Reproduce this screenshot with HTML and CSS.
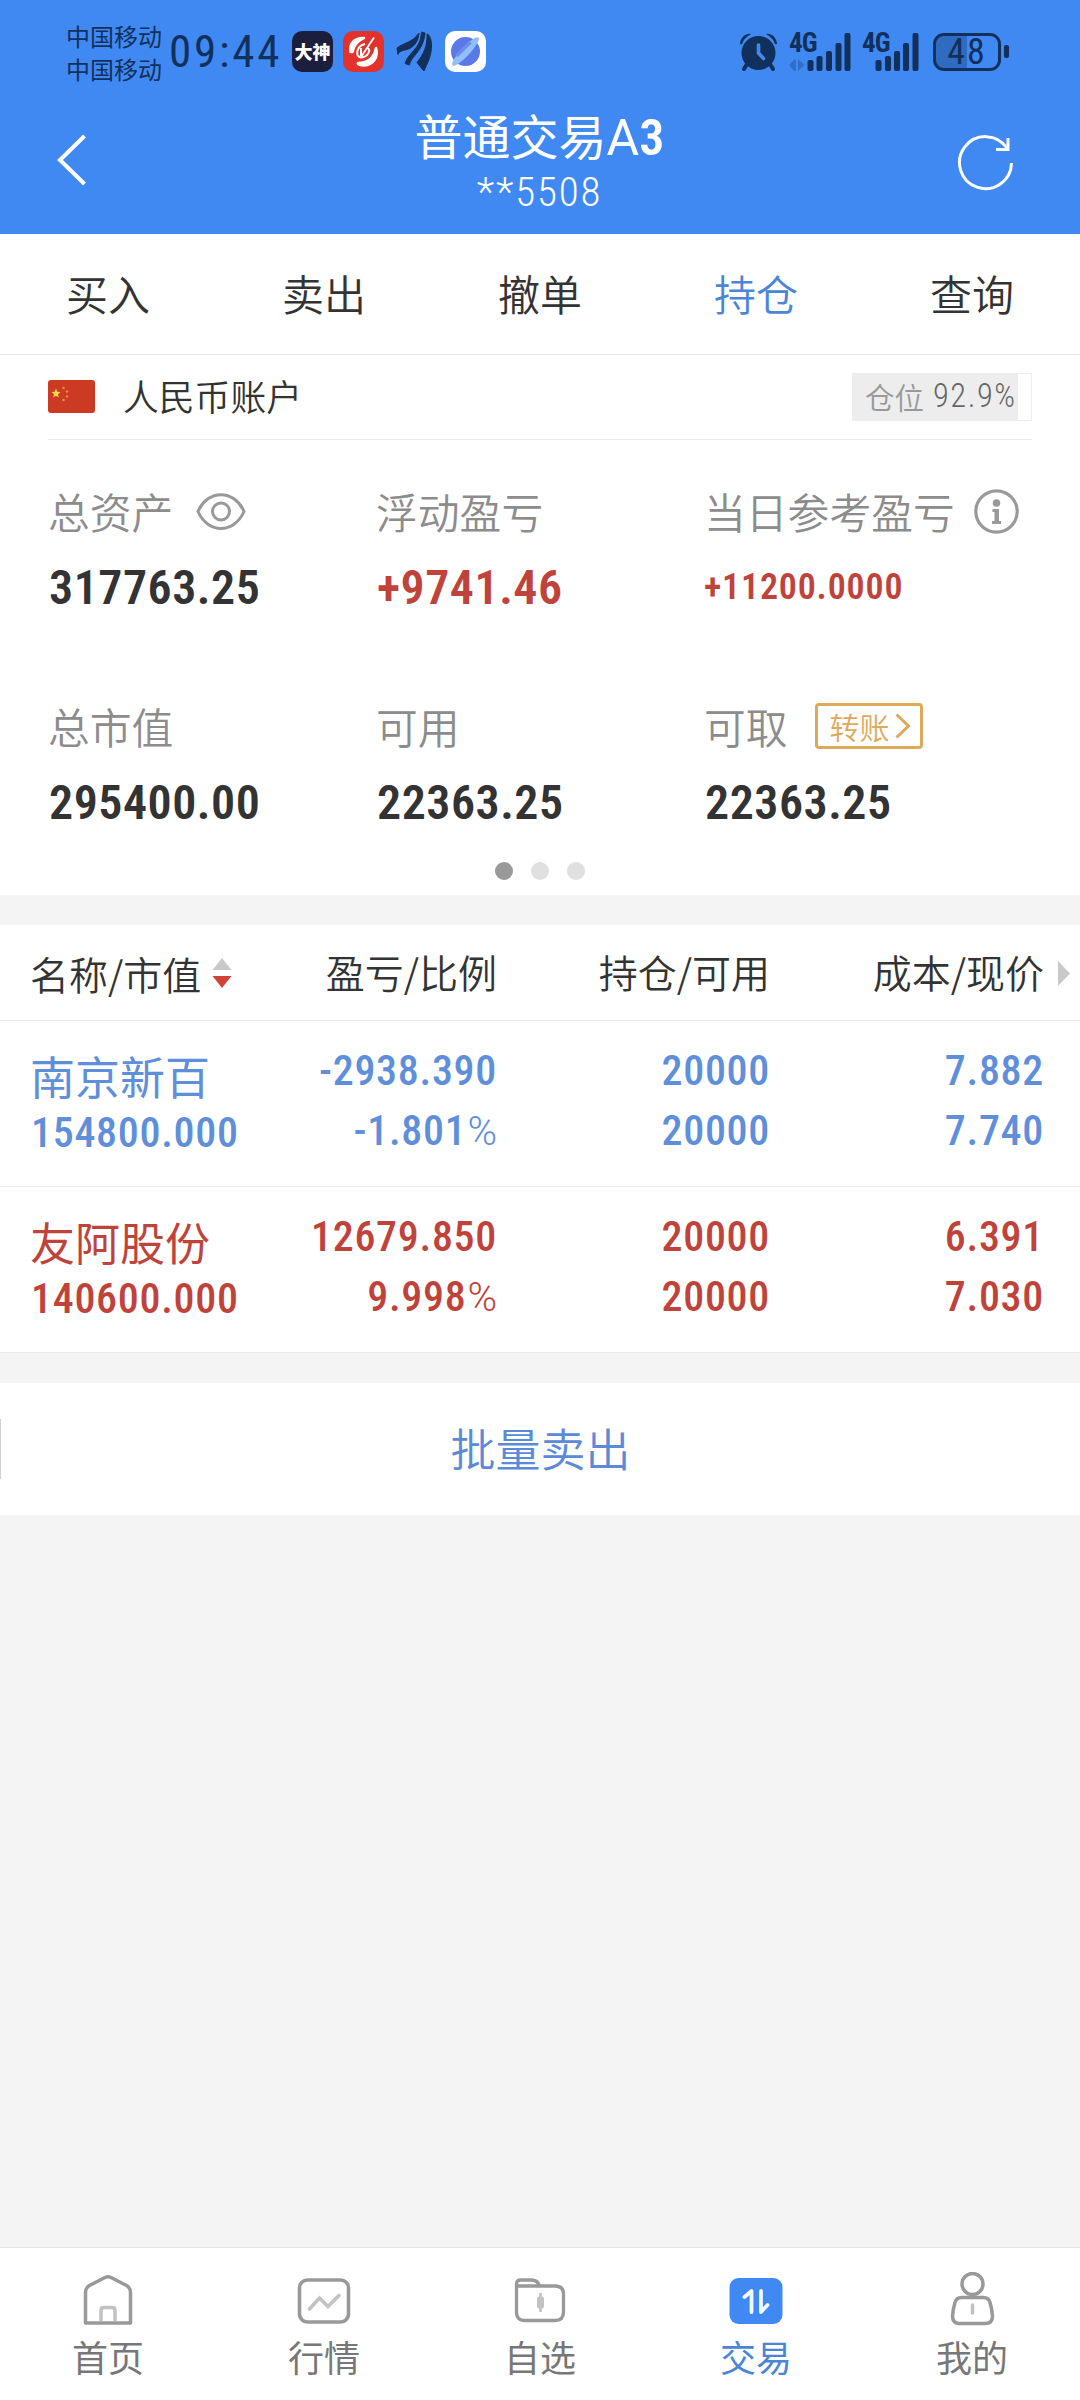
FILE: index.html
```html
<!DOCTYPE html>
<html lang="zh-CN">
<head>
    <meta charset="UTF-8">
    <meta name="viewport" content="width=device-width, initial-scale=1.0">
    <title>普通交易</title>
    <link rel="stylesheet" href="styles.css">
</head>
<body>
    <header class="topo">
        <div class="status">
            <div class="carrier">
                <span>中国移动</span>
                <span>中国移动</span>
            </div>
            <span class="clock">09:44</span>
            <div class="apps">
                <span class="app-dashen">大神</span>
                <svg width="41" height="41" viewBox="0 0 41 41">
                    <rect width="41" height="41" rx="10" fill="#e2322b"/>
                    <path d="M7.500 21C6 12 12 6.500 21 7C17 9 11 13 9.500 21Z" fill="#fff" stroke="#fff" stroke-width="2.500" stroke-linejoin="round"/>
                    <path d="M33 17C36 26 30 34 21 34.500C17 34.500 14 33 15 32C24 32 31 27 33 17Z" fill="#fff" stroke="#fff" stroke-width="2.500" stroke-linejoin="round"/>
                    <path d="M31 6.500L18 26" stroke="#fff" stroke-width="1.800"/>
                    <path d="M22 13C13 15 12 26 18 26.500C25 26 29 18 24 17M18 17L18 25" fill="none" stroke="#fff" stroke-width="2"/>
                </svg>
                <svg width="41" height="41" viewBox="0 0 41 41" fill="#12305c" stroke="#12305c" stroke-width="1">
                    <path d="M3 17C11 11 18 12 25 2C24.500 11 19 17 13 18.500C8 19.500 5 20.500 4 23.500Z"/>
                    <path d="M11 32.500C13 26 17 23 21 18C26 12 27 7 27.500 1L31 2C30 11 27 17 22 23C18 28 16 30 15.500 34Z"/>
                    <path d="M33 3C36 4 37.500 9 37.500 15C37.500 25 33 33 30 40C27 37 26 35 23 31.500C30 23 33.500 14 33 3Z"/>
                </svg>
                <svg width="41" height="41" viewBox="0 0 41 41">
                    <rect width="41" height="41" rx="10" fill="#fff"/>
                    <circle cx="20.500" cy="20.500" r="14.500" fill="#5b78e8"/>
                    <ellipse cx="20.500" cy="20.500" rx="19" ry="4.500" fill="#8fc0fb" transform="rotate(-47 20.500 20.500)"/>
                    <path d="M11.500 25L25.500 11" stroke="#6f8bee" stroke-width="3.500"/>
                </svg>
            </div>
            <div class="signals">
                <svg width="37" height="38" viewBox="0 0 37 38" fill="#12305c">
                    <circle cx="18.500" cy="20" r="17"/>
                    <path d="M0 10C1 4 6 0 11 1Q4 5 2 11Q0 12 0 10ZM37 10C36 4 31 0 26 1Q33 5 35 11Q37 12 37 10Z"/>
                    <path d="M7 31L4 36M30 31L33 36" stroke="#12305c" stroke-width="4" stroke-linecap="round"/>
                    <path d="M18.500 12V20L23.500 25.500" fill="none" stroke="#4089f2" stroke-width="3.600" stroke-linecap="round"/>
                </svg>
                <div class="signal">
                    <span>4G</span>
                    <svg width="62" height="39" viewBox="0 0 62 39" fill="#12305c">
                        <path d="M0 33L6 27V39H5ZM9 27L15.500 33L9 39ZM5 28H7V39H5Z" fill="#306fc8"/>
                        <rect x="18.500" y="28" width="6" height="11" rx="2"/>
                        <rect x="27.500" y="24" width="6" height="15" rx="2"/>
                        <rect x="37" y="19" width="6" height="20" rx="2"/>
                        <rect x="46.500" y="11" width="6" height="28" rx="2"/>
                        <rect x="55.500" y="1" width="6" height="38" rx="2"/>
                    </svg>
                </div>
                <div class="signal">
                    <span>4G</span>
                    <svg width="57" height="39" viewBox="0 0 57 39" fill="#12305c">
                        <rect x="13.500" y="28" width="6" height="11" rx="2"/>
                        <rect x="23" y="24" width="6" height="15" rx="2"/>
                        <rect x="32" y="19" width="6" height="20" rx="2"/>
                        <rect x="41" y="11" width="6" height="28" rx="2"/>
                        <rect x="50.500" y="1" width="6" height="38" rx="2"/>
                    </svg>
                </div>
                <div class="battery"><span>48</span></div>
                <i class="battery-tip"></i>
            </div>
        </div>
        <div class="titlebar">
            <svg width="32" height="52" viewBox="0 0 32 52"><path d="M28.500 2L4 26L28.500 50" fill="none" stroke="#fff" stroke-width="4"/></svg>
            <div class="title">
                <h1>普通交易<span>A</span><b>3</b></h1>
                <p>**5508</p>
            </div>
            <svg width="60" height="60" viewBox="0 0 60 60" fill="none" stroke="#fff" stroke-width="3">
                <path d="M56.500 31A26 26 0 1 1 52 16"/>
                <path d="M53 6V17.500H41"/>
            </svg>
        </div>
    </header>

    <nav class="tabs">
        <a>买入</a>
        <a>卖出</a>
        <a>撤单</a>
        <a class="on">持仓</a>
        <a>查询</a>
    </nav>

    <section class="assets">
        <div class="account">
            <svg width="47" height="33" viewBox="0 0 47 33">
                <rect width="47" height="33" rx="3" fill="#cc3a23"/>
                <path d="M8 8.500L9.300 11.700L12.500 12L10 14.200L10.800 17.500L8 15.700L5.200 17.500L6 14.200L3.500 12L6.700 11.700Z" fill="#fbd84a"/>
                <circle cx="15.500" cy="8" r="1.300" fill="#e88b33"/>
                <circle cx="19" cy="11.500" r="1.300" fill="#e88b33"/>
                <circle cx="19" cy="16.500" r="1.300" fill="#e88b33"/>
                <circle cx="15.500" cy="20" r="1.300" fill="#e88b33"/>
            </svg>
            <span class="account-name">人民币账户</span>
            <div class="position"><i style="width:92.9%"></i><span>仓位</span><em>92.9%</em></div>
        </div>
        <div class="metrics">
            <div class="metric">
                <div class="label">总资产
                    <svg class="eye" width="50" height="37" viewBox="0 0 50 37" fill="none" stroke="#999" stroke-width="3">
                        <path d="M2 18.500C12 -4 38 -4 48 18.500C38 41 12 41 2 18.500Z"/>
                        <circle cx="25" cy="18.500" r="8.500"/>
                    </svg>
                </div>
                <div class="value">317763.25</div>
            </div>
            <div class="metric">
                <div class="label">浮动盈亏</div>
                <div class="value red">+9741.46</div>
            </div>
            <div class="metric">
                <div class="label">当日参考盈亏
                    <svg class="info" width="45" height="45" viewBox="0 0 45 45" fill="#999">
                        <circle cx="22.500" cy="22.500" r="20.700" fill="none" stroke="#999" stroke-width="3.200"/>
                        <circle cx="22.500" cy="14" r="3.800"/>
                        <path d="M18.500 20H25V32H27V35H18V32H20.500V23H18.500Z"/>
                    </svg>
                </div>
                <div class="value red small">+11200.0000</div>
            </div>
            <div class="metric">
                <div class="label">总市值</div>
                <div class="value">295400.00</div>
            </div>
            <div class="metric">
                <div class="label">可用</div>
                <div class="value">22363.25</div>
            </div>
            <div class="metric">
                <div class="label">可取
                    <span class="transfer">转账<svg width="18" height="26" viewBox="0 0 18 26"><path d="M2.500 1.500L14.500 13L2.500 24.500" fill="none" stroke="#dfa95a" stroke-width="3"/></svg></span>
                </div>
                <div class="value">22363.25</div>
            </div>
        </div>
        <div class="dots"><i class="on"></i><i></i><i></i></div>
    </section>

    <section class="holdings">
        <div class="row head">
            <div class="name">名称/市值
                <svg width="20" height="30" viewBox="0 0 20 30"><path d="M10 0L19.500 12H0.500Z" fill="#c9c9c9"/><path d="M0.500 18H19.500L10 30Z" fill="#d0433a"/></svg>
            </div>
            <div>盈亏/比例</div>
            <div>持仓/可用</div>
            <div>成本/现价</div>
            <svg class="more" width="12" height="25" viewBox="0 0 12 25"><path d="M0 0L12 12.500L0 25Z" fill="#c9c9c9"/></svg>
        </div>
        <div class="row stock blue">
            <div class="name"><strong>南京新百</strong><span>154800.000</span></div>
            <div><span>-2938.390</span><span>-1.801<small>%</small></span></div>
            <div><span>20000</span><span>20000</span></div>
            <div><span>7.882</span><span>7.740</span></div>
        </div>
        <div class="row stock red">
            <div class="name"><strong>友阿股份</strong><span>140600.000</span></div>
            <div><span>12679.850</span><span>9.998<small>%</small></span></div>
            <div><span>20000</span><span>20000</span></div>
            <div><span>6.391</span><span>7.030</span></div>
        </div>
    </section>

    <div class="batch"><i></i><span>批量卖出</span></div>

    <footer class="bottom">
        <a>
            <svg width="54" height="56" viewBox="0 0 54 56" fill="none" stroke="#999" stroke-width="3.500">
                <path d="M4.500 51V20.500Q4.500 16 8.500 13.500L24 5.500Q27 4 30 5.500L45.500 13.500Q49.500 16 49.500 20.500V51Z" stroke-linejoin="round"/>
                <path d="M20 49V38Q20 35.500 22.500 35.500H31.500Q34 35.500 34 38V49" stroke="#c2c2c2"/>
            </svg>
            <span>首页</span>
        </a>
        <a>
            <svg width="54" height="56" viewBox="0 0 54 56" fill="none" stroke="#999" stroke-width="3.600">
                <rect x="2.500" y="8" width="49" height="42" rx="8"/>
                <path d="M12.500 37L22.500 26L31 34.500L42 23.500" stroke="#c2c2c2" stroke-linecap="round"/>
            </svg>
            <span>行情</span>
        </a>
        <a>
            <svg width="54" height="56" viewBox="0 0 54 56" fill="none" stroke="#999" stroke-width="3.300">
                <path d="M3.500 14V12Q3.500 8 7.500 8H18Q25 8 26.500 14M3.500 14H42Q50.500 14 50.500 22V40Q50.500 48.500 42 48.500H12Q3.500 48.500 3.500 40Z"/>
                <path d="M27.500 21V40" stroke="#c2c2c2" stroke-width="2.600"/>
                <rect x="24" y="24.500" width="7" height="12" rx="2" fill="#c2c2c2" stroke="none"/>
            </svg>
            <span>自选</span>
        </a>
        <a class="on">
            <svg width="54" height="56" viewBox="0 0 54 56" fill="none" stroke="#f2f8ff" stroke-width="3.800" stroke-linecap="round" stroke-linejoin="round">
                <rect x="0.500" y="6" width="53" height="46" rx="9" fill="#4089f2" stroke="none"/>
                <path d="M15.500 25L22.500 19V40M32 19V40L38.500 33"/>
            </svg>
            <span>交易</span>
        </a>
        <a>
            <svg width="54" height="56" viewBox="0 0 54 56" fill="none" stroke="#999" stroke-width="3.500">
                <circle cx="27.500" cy="12" r="10.500"/>
                <path d="M16.500 25.500H38.500Q43.500 25.500 45 30.500Q47 37 47.500 44Q47.500 51 41 51.500H14Q7.500 51 7.500 44Q8 37 10 30.500Q11.500 25.500 16.500 25.500Z"/>
                <path d="M27.500 33V41" stroke="#c2c2c2" stroke-linecap="round"/>
            </svg>
            <span>我的</span>
        </a>
    </footer>
</body>
</html>
```
FILE: styles.css
```css
* {
    box-sizing: border-box;
    margin: 0;
    padding: 0;
}

body {
    width: 1080px;
    height: 2400px;
    display: flex;
    flex-direction: column;
    background: #f4f4f4;
    color: #333;
    font-family: "Noto Sans CJK SC", sans-serif;
    font-weight: 350;
}

svg, i {
    display: block;
    flex-shrink: 0;
}

em, i {
    font-style: normal;
}

/* header */
.topo {
    height: 234px;
    background: #4089f2;
    color: #fff;
}

.status {
    display: flex;
    align-items: center;
    height: 103px;
    padding: 0 71px 0 66px;
    color: #12305c;
}

.carrier {
    display: flex;
    flex-direction: column;
    width: 103px;
    padding-top: 1px;
    font-size: 24px;
    line-height: 33px;
    font-weight: 400;
}

.clock {
    width: 123px;
    font-family: "Roboto Condensed", sans-serif;
    font-size: 45px;
    font-weight: 400;
    letter-spacing: 2.800px;
}

.apps {
    display: flex;
    gap: 10px;
}

.app-dashen {
    width: 41px;
    height: 41px;
    border-radius: 10px;
    background: #1b1f3d;
    color: #fff;
    font-size: 18px;
    font-weight: 900;
    line-height: 41px;
    text-align: center;
}

.signals {
    display: flex;
    align-items: center;
    margin-left: auto;
}

.signal {
    position: relative;
    margin-left: 12px;
}

.signal + .signal {
    margin-left: 11px;
}

/* network type sits over the low bars */
.signal span {
    position: absolute;
    left: 0;
    top: -5px;
    font-family: "Roboto Condensed", sans-serif;
    font-size: 27px;
    font-weight: 700;
    line-height: 32px;
    letter-spacing: -1px;
}

.battery {
    width: 68px;
    height: 38px;
    margin-left: 14px;
    border: 3px solid #12305c;
    border-radius: 11px;
    background: linear-gradient(90deg, #306bc2 31px, transparent 31px);
    font-family: "Roboto Condensed", sans-serif;
    font-size: 36px;
    font-weight: 400;
    letter-spacing: 2px;
    line-height: 32px;
    text-align: center;
}

.battery-tip {
    width: 5px;
    height: 13px;
    margin-left: 3px;
    border-radius: 2px;
    background: #12305c;
}

.titlebar {
    display: flex;
    justify-content: space-between;
    padding: 0 65px 0 56px;
    height: 131px;
}

.titlebar > svg:first-child {
    margin-top: 31px;
}

.titlebar > svg:last-child {
    margin-top: 29px;
}

.title {
    padding-left: 36px;
    text-align: center;
}

.title h1 {
    font-size: 48px;
    font-weight: 400;
    line-height: 62px;
}

.title h1 span {
    font-family: Roboto, sans-serif;
    font-size: 50px;
}

.title h1 b {
    font-family: "Roboto Condensed", sans-serif;
    font-size: 50px;
    font-weight: 600;
}

.title p {
    font-family: "Roboto Condensed", sans-serif;
    font-size: 41px;
    font-weight: 300;
    line-height: 47px;
    letter-spacing: 1.8px;
}

/* tabs */
.tabs {
    display: flex;
    height: 121px;
    background: #fff;
    border-bottom: 1px solid #e8e8e8;
}

.tabs a {
    flex: 1;
    font-size: 42px;
    line-height: 117px;
    text-align: center;
}

.tabs .on {
    color: #4b85d6;
}

/* account */
.assets {
    height: 540px;
    padding: 0 48px;
    background: #fff;
}

.account {
    display: flex;
    align-items: center;
    height: 85px;
    border-bottom: 1px solid #e8e8e8;
}

.account > svg {
    margin-bottom: 1px;
}

.account-name {
    margin-left: 28px;
    padding-bottom: 4px;
    font-size: 35.800px;
    line-height: 76px;
}

.position {
    position: relative;
    display: flex;
    align-items: center;
    width: 180px;
    height: 48px;
    margin-left: auto;
    padding-left: 12px;
    border: 1px solid #ededed;
    color: #999;
    font-size: 29.500px;
    line-height: 44px;
}

/* filled share of the position */
.position i {
    position: absolute;
    left: 0;
    top: 0;
    bottom: 0;
    background: #ededed;
}

.position span, .position em {
    position: relative;
    top: -1px;
}

.position em {
    margin-left: 9px;
    color: #666;
    font-family: "Roboto Condensed", sans-serif;
    font-size: 32.500px;
    font-weight: 350;
    letter-spacing: 1.5px;
}

.metrics {
    display: grid;
    grid-template-columns: 328px 328px 328px;
    grid-auto-rows: 215px;
    height: 408px;
    padding-top: 38px;
}

.label {
    display: flex;
    align-items: center;
    height: 66px;
    color: #8c8c8c;
    font-size: 41.800px;
    line-height: 60px;
    white-space: nowrap;
}

.value {
    padding: 14px 0 0 1px;
    font-family: "Roboto Condensed", sans-serif;
    font-size: 48px;
    font-weight: 600;
    line-height: 60px;
    letter-spacing: 0.500px;
}

.value.small {
    padding-left: 0;
    font-size: 36px;
    line-height: 58px;
    letter-spacing: 0.800px;
}

.red {
    color: #c0433b;
}

.eye {
    margin-left: 23px;
}

.info {
    margin-left: 19px;
}

.transfer {
    display: flex;
    align-items: center;
    width: 108px;
    height: 46px;
    margin-left: 27px;
    padding-left: 12px;
    border: 3px solid #dfa95a;
    border-radius: 4px;
    color: #dfa95a;
    font-size: 30px;
    line-height: 38px;
}

.transfer svg {
    margin-left: 4px;
}

.dots {
    display: flex;
    justify-content: center;
    gap: 18px;
    padding-top: 14px;
}

.dots i {
    width: 18px;
    height: 18px;
    border-radius: 50%;
    background: #e0e0e0;
}

.dots .on {
    background: #999;
}

/* holdings table */
.holdings {
    margin-top: 30px;
    background: #fff;
}

.row {
    display: grid;
    grid-template-columns: 267px 200px 273px 274px 36px;
    padding-left: 30px;
    text-align: right;
}

.row .name {
    text-align: left;
}

.head {
    height: 96px;
    border-bottom: 1px solid #e8e8e8;
    font-size: 39px;
    line-height: 92px;
}

.head .name {
    display: flex;
    align-items: center;
    gap: 11px;
}

.head .more {
    margin: 36px 0 0 14px;
}

.stock {
    height: 166px;
    padding-top: 20px;
    border-bottom: 1px solid #ececec;
    font-family: "Roboto Condensed", sans-serif;
    font-size: 42px;
    font-weight: 500;
    letter-spacing: 0.700px;
}

.stock span {
    display: block;
    line-height: 60px;
}

.stock .name span {
    padding-left: 1px;
}

.stock small {
    margin-left: 1px;
    font-family: Roboto, sans-serif;
    font-size: 40px;
    font-weight: 350;
    letter-spacing: 0;
}

.stock strong {
    display: block;
    margin-top: 8px;
    font-family: "Noto Sans CJK SC", sans-serif;
    font-size: 45px;
    font-weight: 400;
    letter-spacing: 0;
    line-height: 54px;
}

.blue {
    color: #5f8fdb;
}

/* batch sell */
.batch {
    display: flex;
    align-items: center;
    height: 132px;
    margin-top: 30px;
    background: #fff;
    color: #5b8ad6;
    font-size: 45px;
}

.batch i {
    width: 1px;
    height: 60px;
    background: #d0d0d0;
}

.batch span {
    flex: 1;
    padding-bottom: 4px;
    text-align: center;
}

/* bottom nav */
.bottom {
    display: flex;
    height: 153px;
    margin-top: auto;
    background: #fff;
    border-top: 1px solid #e5e5e5;
}

.bottom a {
    flex: 1;
    display: flex;
    flex-direction: column;
    align-items: center;
    padding-top: 24px;
    color: #777;
    font-size: 36px;
    font-weight: 400;
    line-height: 56px;
}

.bottom .on {
    color: #4b85d6;
}
```
